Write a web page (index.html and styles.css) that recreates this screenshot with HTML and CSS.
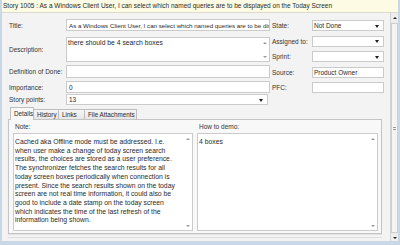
FILE: index.html
```html
<!doctype html>
<html lang="en">
<head>
    <meta charset="UTF-8">
    <title>Story 1005</title>
    <link rel="stylesheet" href="styles.css">
</head>
<body>
<div class="window">
    <div class="caption">Story 1005 : As a Windows Client User, I can select which named queries are to be displayed on the Today Screen</div>
    <div class="main">
        <div class="content">
            <div class="fields">
                <div class="col-left">
                    <div class="row r-title">
                        <span class="label">Title:</span>
                        <div class="box text">As a Windows Client User, I can select which named queries are to be dis</div>
                    </div>
                    <div class="row r-desc">
                        <span class="label">Description:</span>
                        <div class="box memo">
                            <div class="memo-text">there should be 4 search boxes</div>
                            <div class="arrows"><i class="up"></i><i class="down"></i></div>
                        </div>
                    </div>
                    <div class="row r-dod">
                        <span class="label">Definition of Done:</span>
                        <div class="box text"></div>
                    </div>
                    <div class="row r-imp">
                        <span class="label">Importance:</span>
                        <div class="box text">0</div>
                    </div>
                    <div class="row r-sp">
                        <span class="label">Story points:</span>
                        <div class="box text select">13<b class="drop"></b></div>
                    </div>
                </div>
                <div class="col-right">
                    <div class="row">
                        <span class="label">State:</span>
                        <div class="box text select">Not Done<b class="drop"></b></div>
                    </div>
                    <div class="row">
                        <span class="label">Assigned to:</span>
                        <div class="box text select"><b class="drop"></b></div>
                    </div>
                    <div class="row">
                        <span class="label">Sprint:</span>
                        <div class="box text select"><b class="drop"></b></div>
                    </div>
                    <div class="row">
                        <span class="label">Source:</span>
                        <div class="box text">Product Owner</div>
                    </div>
                    <div class="row">
                        <span class="label">PFC:</span>
                        <div class="box text"></div>
                    </div>
                </div>
            </div>

            <div class="tabs">
                <span class="tab tab-details active">Details</span>
                <span class="tab tab-history">History</span>
                <span class="tab tab-links">Links</span>
                <span class="tab tab-files">File Attachments</span>
            </div>
            <div class="panel">
                <span class="plabel">Note:</span>
                <span class="plabel">How to demo:</span>
                <div class="box memo big">
                    <div class="memo-text">Cached aka Offline mode must be addressed. I.e. when user make a change of today screen search results, the choices are stored as a user preference. The synchronizer fetches the search results for all today screen boxes periodically when connection is present. Since the search results shown on the today screen are not real time information, it could also be good to include a date stamp on the today screen which indicates the time of the last refresh of the information being shown.</div>
                    <div class="arrows"><i class="up"></i><i class="down"></i></div>
                </div>
                <div class="box memo big">
                    <div class="memo-text">4 boxes</div>
                    <div class="arrows"><i class="up"></i><i class="down"></i></div>
                </div>
            </div>
        </div>
        <div class="vscroll">
            <i class="sup"></i>
            <div class="thumb"><span class="grip"></span></div>
            <i class="sdown"></i>
        </div>
    </div>
</div>
</body>
</html>
```

FILE: styles.css
```css
* {
    margin: 0;
    padding: 0;
    box-sizing: border-box;
}

body {
    width: 400px;
    height: 245px;
    overflow: hidden;
    font-family: "Liberation Sans", Arial, sans-serif;
    font-size: 6.5px;
    color: #333;
    background: #fff;
}

.window {
    width: 400px;
    height: 245px;
    display: flex;
    flex-direction: column;
    border: 2px solid #c9d7e7;
    border-top: 0;
    border-bottom-width: 4px;
    background: #f3f3f3;
}

.caption {
    height: 13px;
    line-height: 12px;
    padding-left: 1px;
    white-space: nowrap;
    overflow: hidden;
    background: #fdfbe3;
    border-bottom: 1px solid #dcdacb;
    color: #2a2a2a;
}

.main {
    flex: 1;
    display: flex;
    min-height: 0;
}

.content {
    flex: 1;
    display: flex;
    flex-direction: column;
    padding: 6px 6px 7px 6px;
}

/* top form */
.fields {
    display: flex;
    gap: 2px;
    padding-left: 1px;
}

.row {
    display: flex;
    align-items: center;
}

.label {
    flex-shrink: 0;
    white-space: nowrap;
}

.col-left .label {
    width: 57px;
}

.col-left .box {
    width: 204px;
}

.col-right {
    display: flex;
    flex-direction: column;
    gap: 4.5px;
    padding-top: 1px;
}

.col-right .label {
    width: 40px;
}

.col-right .box {
    width: 72px;
    height: 11px;
}

.r-title { margin-bottom: 6px; }
.r-title .box { height: 12px; font-size: 6.2px; }
.r-desc { margin-bottom: 3px; }
.r-desc .box { height: 25px; }
.r-dod { margin-bottom: 3px; }
.r-dod .box { height: 13px; }
.r-imp { margin-bottom: 1px; }
.r-imp .box { height: 12px; }
.r-sp .box { height: 11px; width: 202px; }

.box {
    background: #fff;
    border: 1px solid #cbcbcb;
}

.text {
    position: relative;
    display: flex;
    align-items: center;
    padding-left: 2px;
    white-space: nowrap;
    overflow: hidden;
    color: #2a2a2a;
}

.col-right .text {
    padding-left: 1px;
}

.drop {
    position: absolute;
    right: 4px;
    top: 50%;
    margin-top: -1px;
    border-top: 3px solid #1e1e1e;
    border-left: 2px solid transparent;
    border-right: 2px solid transparent;
}

.memo {
    display: flex;
    font-size: 6.8px;
    line-height: 8.7px;
    color: #2a2a2a;
}

.memo-text {
    flex: 1;
    padding: 1px 2px 0 1px;
}

.memo.big .memo-text {
    padding: 4px 5px 0 1px;
}

.arrows {
    width: 9px;
    display: flex;
    flex-direction: column;
    justify-content: space-between;
    align-items: center;
    padding: 4px 0 3px;
}

.arrows .up {
    border-bottom: 2px solid #9a9a9a;
    border-left: 2px solid transparent;
    border-right: 2px solid transparent;
}

.arrows .down {
    border-top: 2px solid #9a9a9a;
    border-left: 2px solid transparent;
    border-right: 2px solid transparent;
}

/* tabs */
.tabs {
    display: flex;
    align-items: flex-end;
    height: 12px;
    margin-top: 2px;
    padding-left: 2px;
    position: relative;
    z-index: 1;
    font-size: 6.3px;
}

.tab {
    height: 10px;
    line-height: 9px;
    padding-left: 3px;
    white-space: nowrap;
    border: 1px solid #bdbdbd;
    border-bottom: 0;
    border-left: 0;
    background: linear-gradient(#f6f6f6, #e6e6e6);
    color: #2a2a2a;
}

.tab.active {
    height: 13px;
    line-height: 11px;
    margin-bottom: -1px;
    border-left: 1px solid #bdbdbd;
    background: #f8f8f8;
}

.tab-details { width: 24px; }
.tab-history { width: 25px; }
.tab-links { width: 26px; }
.tab-files { width: 52px; }

.panel {
    flex: 1;
    display: grid;
    grid-template-columns: 180px 181px;
    grid-template-rows: 11px 1fr;
    column-gap: 4px;
    margin-right: 2px;
    padding: 2px 3px 2px 4px;
    border: 1px solid #c4c4c4;
    background: #f8f8f8;
    box-shadow: 0 1px 0 #e2e2e2, 0 3px 0 #f3f3f3, 0 4px 0 #dedede;
}

.plabel {
    padding-left: 2px;
    line-height: 10px;
}

/* window scrollbar */
.vscroll {
    width: 8px;
    display: flex;
    flex-direction: column;
    align-items: center;
    border-left: 1px solid #d2d2d2;
    background: #eeeeee;
    padding: 4px 0 2px;
}

.sup {
    border-bottom: 2px solid #222;
    border-left: 2px solid transparent;
    border-right: 2px solid transparent;
}

.sdown {
    border-top: 2px solid #222;
    border-left: 2px solid transparent;
    border-right: 2px solid transparent;
}

.thumb {
    flex: 1;
    width: 7px;
    margin: 4px 0;
    display: flex;
    align-items: center;
    justify-content: center;
    border: 1px solid #cfcfcf;
    background: #f4f4f4;
}

.grip {
    width: 3px;
    height: 3px;
    border-top: 1px solid #999;
    border-bottom: 1px solid #999;
}
```
